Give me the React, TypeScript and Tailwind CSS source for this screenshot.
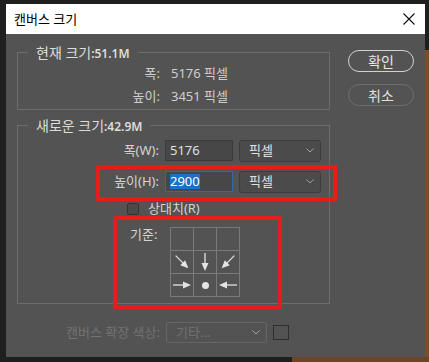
import React from 'react';

const font = { fontFamily: '"Noto Sans", "Noto Sans CJK KR", sans-serif' };

function Chevron() {
  return (
    <svg width="8" height="5" viewBox="0 0 8 5" className="shrink-0">
      <path d="M0.5 0.5 L4 4 L7.5 0.5" fill="none" stroke="#a0a0a0" strokeWidth="1" />
    </svg>
  );
}

function Arrow({ dir }: { dir: 'dr' | 'd' | 'dl' | 'r' | 'l' }) {
  const rot = { d: 0, dr: -45, dl: 45, r: -90, l: 90 }[dir];
  return (
    <svg width="22" height="22" viewBox="0 0 22 22">
      <g transform={`rotate(${rot} 11 11)`}>
        <line x1="11" y1="2" x2="11" y2="14" stroke="#e4e4e4" strokeWidth="1.3" />
        <path d="M7.5 12 L14.5 12 L11 20 Z" fill="#e4e4e4" />
      </g>
    </svg>
  );
}

function Cell({ children }: { children?: React.ReactNode }) {
  return <div className="flex items-center justify-center border-r border-b border-[#7a7a7a]">{children}</div>;
}

export default function App() {
  return (
    <div className="relative w-[429px] h-[362px] overflow-hidden bg-[#1f1f1f] pt-[4px] pl-[6px]" style={font}>
      {/* background behind the dialog */}
      <div className="absolute right-0 top-[50px] w-[4px] h-[312px] bg-[#7b4d2b]" />
      <div className="absolute left-[292px] bottom-0 w-[137px] h-[5px] bg-[#6e4426]" />

      {/* Dialog */}
      <div className="relative w-[419px] h-[353px] flex flex-col">
        {/* Title bar */}
        <div className="h-[30px] bg-white flex items-center justify-between pl-[8px] pr-[10px]">
          <span className="text-[13px] text-black leading-none">캔버스 크기</span>
          <svg width="12" height="12" viewBox="0 0 12 12">
            <path d="M0.5 0.5 L11.5 11.5 M11.5 0.5 L0.5 11.5" stroke="#111" strokeWidth="1.1" />
          </svg>
        </div>

        {/* Body */}
        <div className="flex-1 bg-[#535353] pl-[11px] pt-[18px] flex">
          <div className="w-[313px] flex flex-col">
            {/* Current size */}
            <div className="relative h-[58px] border border-[#6c6c6c] pt-[9px]">
              <div className="absolute left-[10px] -top-[9px] px-[8px] bg-[#535353] flex items-baseline leading-[18px] text-[#dcdcdc]">
                <span className="text-[14px]">현재 크기</span>
                <span className="text-[12px] font-semibold">:51.1M</span>
              </div>
              <div className="h-[23px] flex items-center text-[13px] text-[#cfcfcf]">
                <span className="w-[142px] text-right">폭:</span>
                <span className="ml-[11px]">5176 픽셀</span>
              </div>
              <div className="h-[23px] flex items-center text-[13px] text-[#cfcfcf]">
                <span className="w-[142px] text-right">높이:</span>
                <span className="ml-[11px]">3451 픽셀</span>
              </div>
            </div>

            {/* New size */}
            <div className="relative mt-[15px] h-[179px] border border-[#6c6c6c] pt-[14px]">
              <div className="absolute left-[10px] -top-[9px] px-[8px] bg-[#535353] flex items-baseline leading-[18px] text-[#dcdcdc]">
                <span className="text-[14px]">새로운 크기</span>
                <span className="text-[12px] font-semibold">:42.9M</span>
              </div>
              <div className="h-[21px] flex items-center text-[13px] text-[#d4d4d4]">
                <span className="w-[141px] text-right">폭(W):</span>
                <div className="ml-[6px] w-[68px] h-[21px] bg-[#474747] border border-[#3a3a3a] flex items-center pl-[4px] text-[#e0e0e0]">5176</div>
                <div className="ml-[6px] w-[82px] h-[22px] bg-[#4b4b4b] border border-[#3c3c3c] rounded-[3px] flex items-center justify-between pl-[9px] pr-[6px] text-[#e0e0e0]">
                  <span>픽셀</span>
                  <Chevron />
                </div>
              </div>
              <div className="mt-[10px] h-[21px] flex items-center text-[13px] text-[#d4d4d4]">
                <span className="w-[141px] text-right">높이(H):</span>
                <div className="ml-[6px] w-[68px] h-[21px] bg-[#474747] border border-[#2d68b0] flex items-center pl-[4px]">
                  <span className="bg-[#1d6fc7] text-white leading-[15px]">2900</span>
                </div>
                <div className="ml-[6px] w-[82px] h-[22px] bg-[#4b4b4b] border border-[#3c3c3c] rounded-[3px] flex items-center justify-between pl-[9px] pr-[6px] text-[#e0e0e0]">
                  <span>픽셀</span>
                  <Chevron />
                </div>
              </div>
              <div className="mt-[11px] h-[12px] flex items-center text-[13px] text-[#d4d4d4]">
                <div className="ml-[109px] w-[12px] h-[12px] rounded-[2px] border border-[#333] bg-[#4a4a4a]" />
                <span className="ml-[9px]">상대치(R)</span>
              </div>
              <div className="mt-[12px] flex text-[13px] text-[#d4d4d4]">
                <span className="ml-[112px] w-[40px] leading-[15px]">기준:</span>
                <div className="grid grid-cols-3 grid-rows-3 w-[70px] h-[70px] border-l border-t border-[#7a7a7a]">
                  <Cell />
                  <Cell />
                  <Cell />
                  <Cell><Arrow dir="dr" /></Cell>
                  <Cell><Arrow dir="d" /></Cell>
                  <Cell><Arrow dir="dl" /></Cell>
                  <Cell><Arrow dir="r" /></Cell>
                  <Cell><div className="w-[7px] h-[7px] rounded-full bg-[#e4e4e4]" /></Cell>
                  <Cell><Arrow dir="l" /></Cell>
                </div>
              </div>
            </div>

            {/* Extension colour (disabled) */}
            <div className="mt-[18px] flex items-center text-[13px] text-[#727272]">
              <span className="w-[143px] text-right">캔버스 확장 색상:</span>
              <div className="ml-[6px] w-[101px] h-[21px] border border-[#666] rounded-[3px] flex items-center justify-between pl-[9px] pr-[6px]">
                <span>기타...</span>
                <Chevron />
              </div>
              <div className="ml-[6px] w-[16px] h-[15px] border border-[#2f2f2f]" />
            </div>
          </div>

          {/* Buttons */}
          <div className="ml-[18px] -mt-[2px] flex flex-col">
            <div className="w-[66px] h-[22px] rounded-full border-[1.5px] border-[#d2d2d2] flex items-center justify-center text-[14px] text-[#e8e8e8]">확인</div>
            <div className="mt-[12px] w-[66px] h-[22px] rounded-full border border-[#6e6e6e] flex items-center justify-center text-[14px] text-[#e0e0e0]">취소</div>
          </div>
        </div>
      </div>

      {/* red annotation boxes */}
      <div className="absolute left-[96px] top-[165px] w-[241px] h-[36px] border-4 border-[#e41e1e]" />
      <div className="absolute left-[113px] top-[216px] w-[169px] h-[93px] border-4 border-[#e41e1e]" />
    </div>
  );
}
